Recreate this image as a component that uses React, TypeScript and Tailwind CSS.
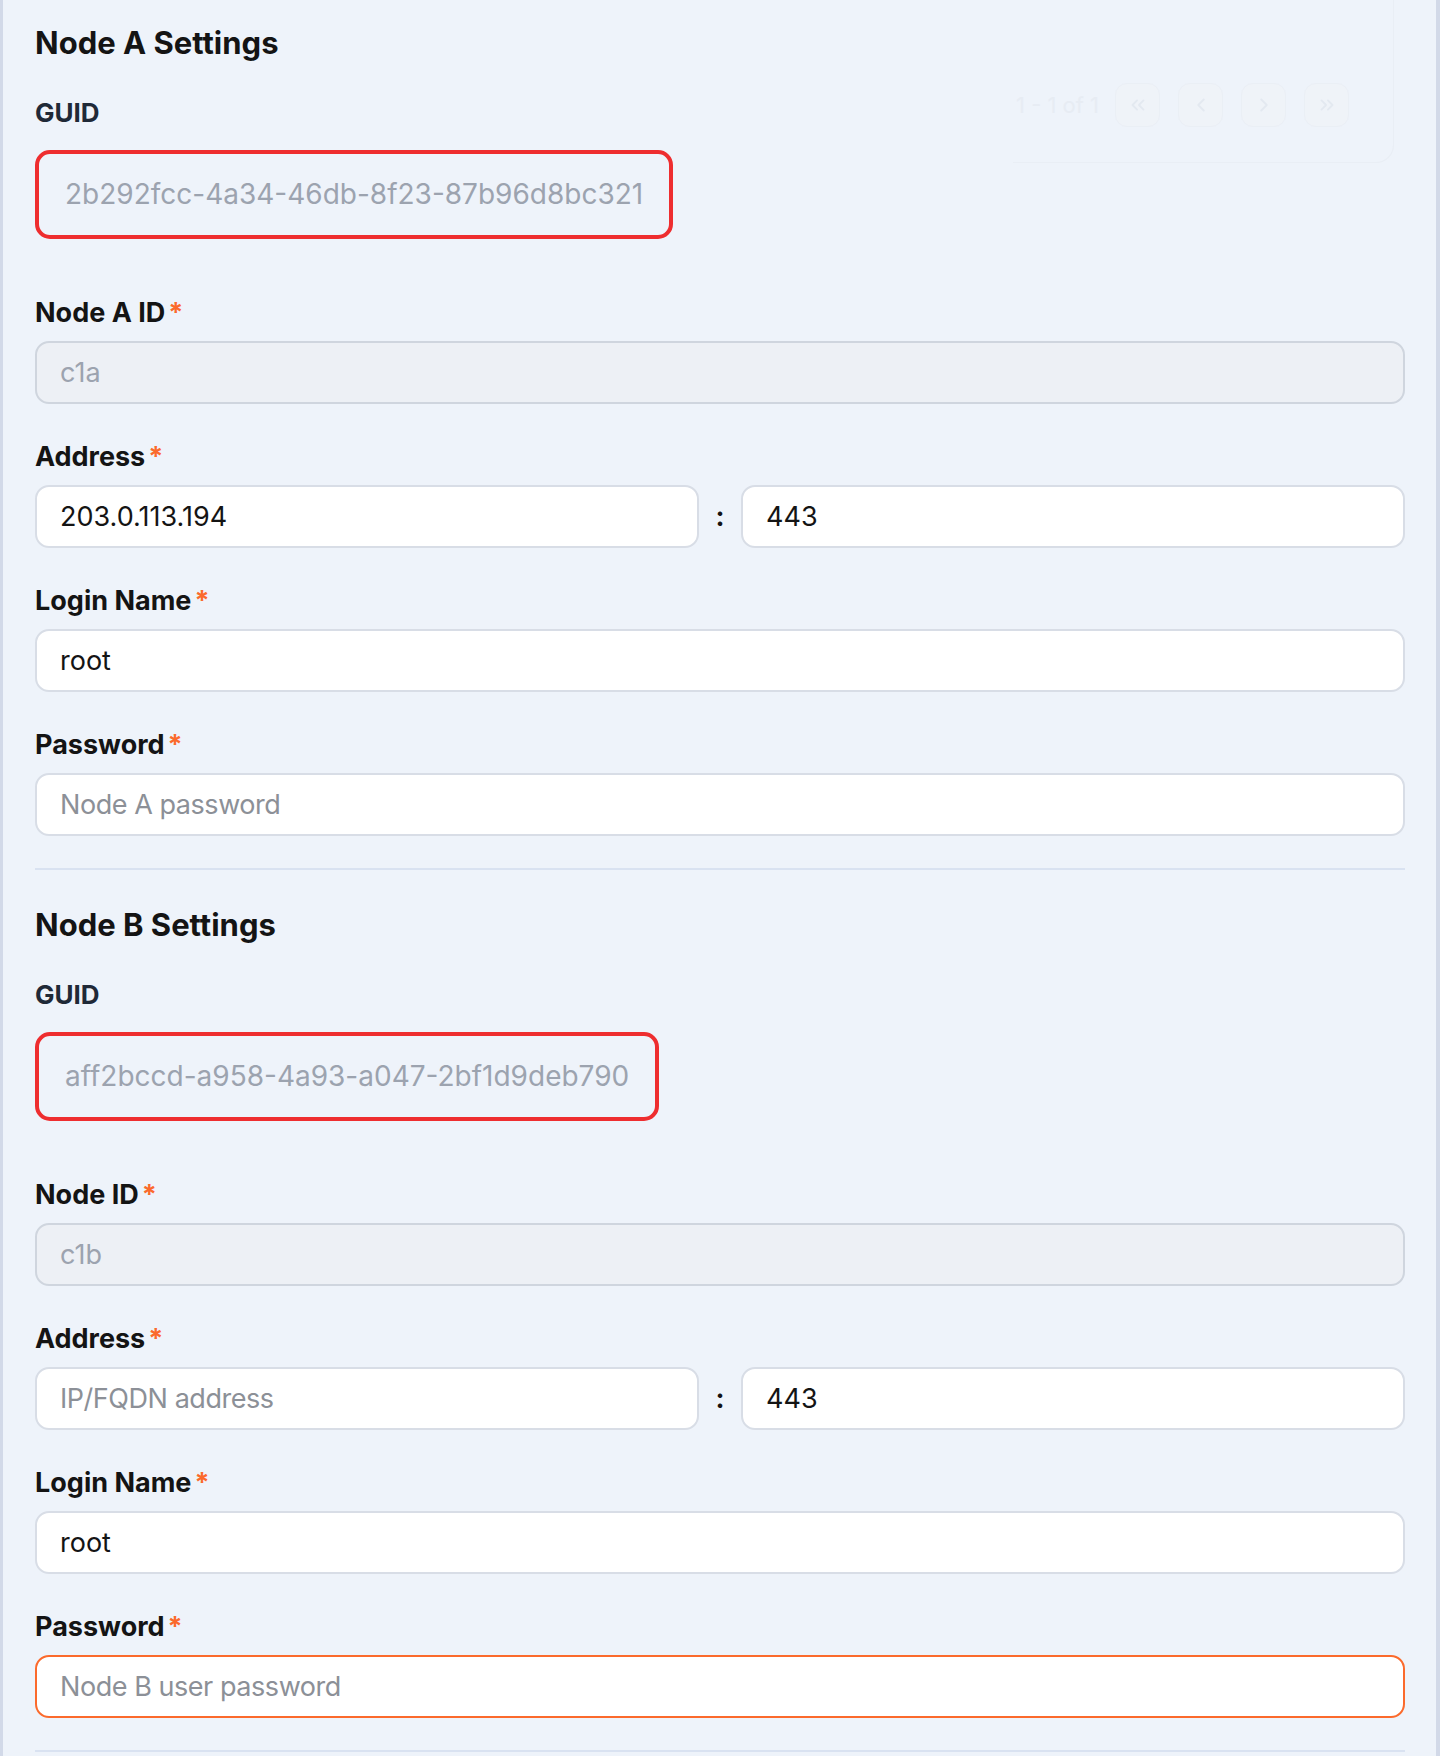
import React from "react";
import { ChevronLeft, ChevronRight, ChevronsLeft, ChevronsRight } from "lucide-react";

type InputProps = {
  value?: string;
  placeholder?: string;
  variant?: "normal" | "disabled" | "error";
};

function TextInput({ value, placeholder, variant = "normal" }: InputProps) {
  const base =
    "h-[63px] w-full rounded-[14px] border-2 pl-[23px] pr-6 text-[27px] leading-[40px] outline-none placeholder:text-[#8c9097] placeholder:tracking-[-0.45px]";
  const look =
    variant === "disabled"
      ? "bg-[#edf0f5] border-[#cfd5de] text-[#9ca3af]"
      : variant === "error"
      ? "bg-white border-[#fb6a2c] text-[#141414]"
      : "bg-white border-[#d8dde6] text-[#141414]";
  return (
    <input
      readOnly
      className={`${base} ${look}`}
      defaultValue={value}
      placeholder={placeholder}
    />
  );
}

function Label({ children }: { children: React.ReactNode }) {
  return (
    <div className="mb-2 h-10 text-[27px] font-bold leading-10 text-[#141414]">
      {children}
      <span className="ml-[3px] text-[#fb6a2c]">*</span>
    </div>
  );
}

type SectionProps = {
  title: string;
  guid: string;
  idLabel: string;
  idValue: string;
  address?: string;
  passwordPlaceholder: string;
  passwordError?: boolean;
};

function Section({
  title,
  guid,
  idLabel,
  idValue,
  address,
  passwordPlaceholder,
  passwordError,
}: SectionProps) {
  return (
    <section className="border-b-2 border-[#d9e2f1] pb-8">
      <h2 className="h-10 text-[31px] font-bold leading-10 text-[#141414]">{title}</h2>
      <div className="mt-[34px] h-8 text-[26px] font-bold leading-8 text-[#1f2937]">GUID</div>
      <div className="mt-[21px] flex">
        <div className="rounded-[15px] border-4 border-[#ee2d2f] px-[26px] py-5 text-[28px] leading-[41px] text-[#9ca3af]">
          {guid}
        </div>
      </div>
      <div className="mt-[54px] flex flex-col gap-[33px]">
        <div>
          <Label>{idLabel}</Label>
          <TextInput value={idValue} variant="disabled" />
        </div>
        <div>
          <Label>Address</Label>
          <div className="flex items-center">
            <div className="flex-1">
              <TextInput value={address} placeholder="IP/FQDN address" />
            </div>
            <span className="w-[42px] text-center text-[27px] font-bold leading-10 text-[#141414]">:</span>
            <div className="flex-1">
              <TextInput value="443" />
            </div>
          </div>
        </div>
        <div>
          <Label>Login Name</Label>
          <TextInput value="root" />
        </div>
        <div>
          <Label>Password</Label>
          <TextInput
            placeholder={passwordPlaceholder}
            variant={passwordError ? "error" : "normal"}
          />
        </div>
      </div>
    </section>
  );
}

function GhostPagination() {
  const btn =
    "flex h-[44px] w-[45px] items-center justify-center rounded-[12px] border border-[#e9edf3] bg-[#f0f3f8] text-[#dde3eb]";
  return (
    <div className="pointer-events-none absolute left-[1010px] top-0 h-[163px] w-[381px] rounded-br-[18px] border-b border-r border-[#e6ebf2] opacity-60">
      <div className="absolute left-[3px] top-[83px] flex h-[44px] items-center gap-[16px]">
        <span className="text-[22px] text-[#e3e8f0]">1 - 1 of 1</span>
        <div className="flex gap-[18px]">
          <div className={btn}>
            <ChevronsLeft size={22} strokeWidth={2} />
          </div>
          <div className={btn}>
            <ChevronLeft size={22} strokeWidth={2} />
          </div>
          <div className={btn}>
            <ChevronRight size={22} strokeWidth={2} />
          </div>
          <div className={btn}>
            <ChevronsRight size={22} strokeWidth={2} />
          </div>
        </div>
      </div>
    </div>
  );
}

export default function App() {
  return (
    <div className="relative min-h-[1756px] overflow-hidden border-l-[3px] border-r-4 border-[#d2d9e8] bg-[#eef3fa] pl-8 pr-[31px] pt-[23px] font-[Inter,'Noto_Sans',sans-serif]">
      <GhostPagination />
      <div className="relative">
        <Section
          title="Node A Settings"
          guid="2b292fcc-4a34-46db-8f23-87b96d8bc321"
          idLabel="Node A ID"
          idValue="c1a"
          address="203.0.113.194"
          passwordPlaceholder="Node A password"
        />
        <div className="mt-[35px]">
          <Section
            title="Node B Settings"
            guid="aff2bccd-a958-4a93-a047-2bf1d9deb790"
            idLabel="Node ID"
            idValue="c1b"
            passwordPlaceholder="Node B user password"
            passwordError
          />
        </div>
      </div>
    </div>
  );
}
